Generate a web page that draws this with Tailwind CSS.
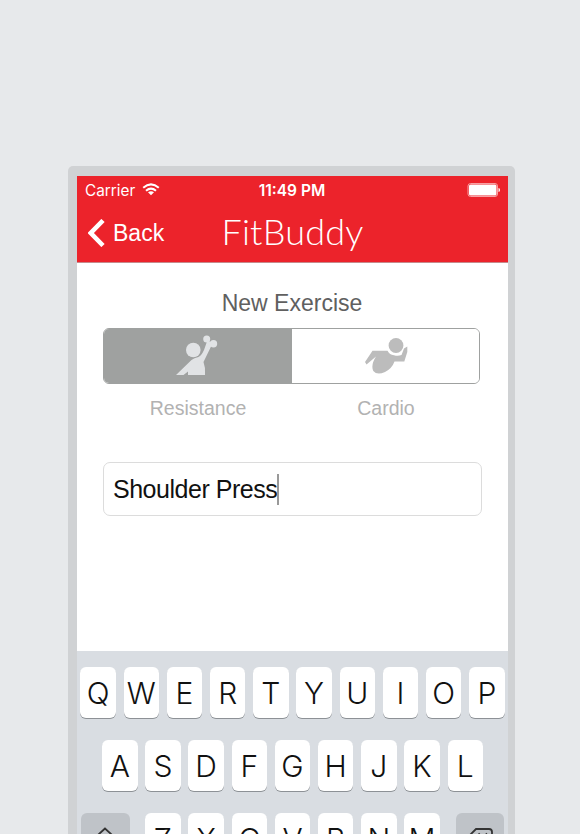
<!DOCTYPE html>
<html lang="en">
<head>
<meta charset="utf-8">
<title>FitBuddy</title>
<script src="https://cdn.jsdelivr.net/npm/@tailwindcss/browser@4"></script>
</head>
<body class="h-[834px] w-[580px] overflow-hidden bg-[#e7e9eb] pt-[166px] font-['Liberation_Sans',sans-serif]">
<main class="ml-[68px] h-[700px] w-[447px] rounded-[5px] bg-[#d0d2d4] pt-[10px] pr-[7px] pl-[9px]">
  <div class="flex h-full flex-col bg-white">
    <header class="h-[87px] border-b border-[#c58a8c] bg-[#ec232b] text-white">
      <div class="grid h-[27px] grid-cols-3 items-center px-2">
        <div class="flex items-center gap-[7px]">
          <span class="pt-[2px] font-['Inter',sans-serif] text-[15.300px] leading-none font-normal">Carrier</span>
          <svg class="h-[13px] w-[18px]" viewBox="0 0 18 13" fill="none" stroke="white" stroke-width="2"><path d="M1.200 4.700Q9-2 16.800 4.700M4 7.800Q9 3.400 14 7.800"/><path d="M9 12.200L6 9.300Q9 7 12 9.300Z" fill="white" stroke="none"/></svg>
        </div>
        <span class="pt-[2px] pr-[1px] text-center font-['Inter',sans-serif] text-[15.500px] leading-none font-semibold">11:49 PM</span>
        <svg class="h-[14px] w-[33px] justify-self-end" viewBox="0 0 33 14"><rect x="1" y=".5" width="29.500" height="13" rx="2.500" fill="none" stroke="#f8a0a3"/><rect x="2" y="1.500" width="27.500" height="11" rx="1.500" fill="white"/><path d="M31.500 5Q33 5 33 7T31.500 9Z" fill="white"/></svg>
      </div>
      <div class="grid h-[59px] grid-cols-[96px_1fr_96px] items-center">
        <div class="flex items-center pl-[10.500px]">
          <svg class="h-[28px] w-[17px] shrink-0" viewBox="0 0 17 28" fill="none" stroke="white" stroke-width="4.600"><path d="M15 1.500L2.800 14L15 26.500"/></svg>
          <span class="ml-[8.500px] pt-[2px] text-[23px] leading-none">Back</span>
        </div>
        <h1 class="pb-[3px] text-center font-['Lato',sans-serif] text-[36px] leading-none font-light tracking-[0.2px]">FitBuddy</h1>
      </div>
    </header>

    <section class="h-[388px] px-[26px] pt-[27px]">
      <h2 class="-ml-[1px] text-center text-[23px] leading-[27px] text-[#606060]">New Exercise</h2>
      <div class="mt-[11px] flex h-[56px] w-[377px] overflow-hidden rounded-[6px] border border-[#9fa1a0]">
        <button class="flex w-[188px] items-center justify-center bg-[#9fa1a0]">
          <svg class="h-[40px] w-[42px] -translate-x-[1px] -translate-y-[1px]" viewBox="0 0 42 40" fill="#e1e3e5"><circle cx="17.300" cy="15" r="7.300"/><circle cx="30.700" cy="3.900" r="3.500"/><circle cx="37.500" cy="8.700" r="3.700"/><path d="M0 40L15.500 25Q18 22.800 22.500 22Q25.500 20.500 28 15L31.500 5L36.500 8.500L27.500 27Q29.800 33 29 40H12V36.500L7.500 40Z"/></svg>
        </button>
        <button class="flex flex-1 items-center justify-center bg-white">
          <svg class="h-[36px] w-[43px] translate-x-[1px]" viewBox="0 0 43 36" fill="#bcbcbc"><circle cx="31" cy="7.500" r="7.400"/><path d="M0 24L7.500 12.700H22.500Q24.500 16.700 29 17.200Q33 18.500 36.500 17L39 10.500L42.300 8.500V14L39.300 23.500H29.500Q27 30.500 20 34Q12 37.500 8.300 33Q5.500 27 11 18.500L1.500 26.500Z"/></svg>
        </button>
      </div>
      <div class="mt-[12px] flex w-[377px] text-center text-[19.500px] leading-[24px] text-[#b2b2b2]"><span class="w-[190px]">Resistance</span><span class="-ml-[1px] flex-1">Cardio</span></div>
      <div class="mt-[42px] flex h-[54px] w-[379px] items-center rounded-[7px] border border-[#dcdcdc] pl-[9px] text-[25px] text-[#111]"><span class="pt-[1px] tracking-[-0.480px]">Shoulder Press</span><span class="h-[31px] w-[2px] bg-[#999]"></span></div>
    </section>

    <section class="flex flex-1 flex-col gap-[21px] bg-[#d9dde2] pt-[16px] font-['Inter',sans-serif] text-[30px] leading-[52px] font-light text-[#111]">
      <div class="flex h-[52px] shrink-0 justify-center gap-[7.700px] text-center *:h-[51px] *:w-[35.500px] *:rounded-[6px] *:bg-white *:shadow-[0_1px_0_#8d9196]"><span>Q</span><span>W</span><span>E</span><span>R</span><span>T</span><span>Y</span><span>U</span><span>I</span><span>O</span><span>P</span></div>
      <div class="flex h-[52px] shrink-0 justify-center gap-[7.700px] text-center *:h-[51px] *:w-[35.500px] *:rounded-[6px] *:bg-white *:shadow-[0_1px_0_#8d9196]"><span>A</span><span>S</span><span>D</span><span>F</span><span>G</span><span>H</span><span>J</span><span>K</span><span>L</span></div>
      <div class="flex h-[52px] shrink-0 justify-between px-[4px]">
        <div class="flex w-[48.500px] justify-center rounded-[6px] bg-[#bfc3c8] pt-[14px]"><svg class="h-[24px] w-[28px]" viewBox="0 0 28 24" fill="none" stroke="#333" stroke-width="1.800"><path d="M14 1.500L1.500 13H8V22H20V13H26.500Z"/></svg></div>
        <div class="flex gap-[7.700px] text-center *:h-[51px] *:w-[35.500px] *:rounded-[6px] *:bg-white *:shadow-[0_1px_0_#8d9196]"><span>Z</span><span>X</span><span>C</span><span>V</span><span>B</span><span>N</span><span>M</span></div>
        <div class="flex w-[48.500px] justify-center rounded-[6px] bg-[#bfc3c8] pt-[14.500px]"><svg class="h-[21px] w-[28px]" viewBox="0 0 28 21" fill="none" stroke="#333" stroke-width="1.800"><path d="M10 1H23Q26 1 26 4V16Q26 19 23 19H10L1 10ZM12.500 5.500L21 14M21 5.500L12.500 14"/></svg></div>
      </div>
    </section>
  </div>
</main>
</body>
</html>
